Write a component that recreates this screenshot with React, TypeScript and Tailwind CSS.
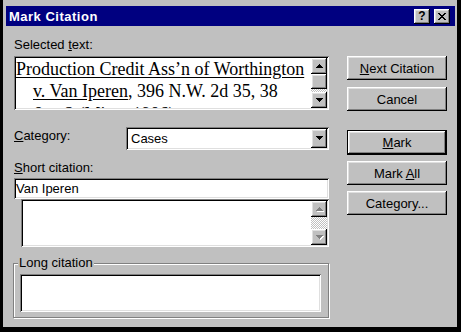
import React from "react";

const raised =
  "shadow-[inset_-1px_-1px_#000000,inset_1px_1px_#ffffff,inset_-2px_-2px_#808080,inset_2px_2px_#dfdfdf]";
const sunken =
  "shadow-[inset_1px_1px_#808080,inset_-1px_-1px_#ffffff,inset_2px_2px_#000000,inset_-2px_-2px_#dfdfdf]";
const dither =
  "bg-[image:repeating-conic-gradient(#c0c0c0_0%_25%,#ffffff_0%_50%)] bg-[length:2px_2px]";

const UP = "M3 0h1v1h1v1h1v1h1v1H0V3h1V2h1V1h1z";
const DOWN = "M0 0h7v1H6v1H5v1H4v1H3V3H2V2H1V1H0z";

function Arrow({ up, disabled }: { up?: boolean; disabled?: boolean }) {
  const d = up ? UP : DOWN;
  return (
    <svg width="8" height="5" viewBox="0 0 8 5" shapeRendering="crispEdges">
      {disabled && <path d={d} fill="#ffffff" transform="translate(1 1)" />}
      <path d={d} fill={disabled ? "#808080" : "#000000"} />
    </svg>
  );
}

function ScrollBtn({ up, disabled }: { up?: boolean; disabled?: boolean }) {
  return (
    <div className={`w-[16px] h-[16px] shrink-0 bg-[#c0c0c0] ${raised} flex items-center justify-center pl-px`}>
      <Arrow up={up} disabled={disabled} />
    </div>
  );
}

function Btn({ children, isDefault }: { children: React.ReactNode; isDefault?: boolean }) {
  if (isDefault) {
    return (
      <div className="h-[25px] border border-black">
        <div className={`h-full bg-[#c0c0c0] ${raised} flex items-center justify-center`}>{children}</div>
      </div>
    );
  }
  return <div className={`h-[24px] bg-[#c0c0c0] ${raised} flex items-center justify-center`}>{children}</div>;
}

const X_PIXELS = [
  [0, 0], [1, 0], [6, 0], [7, 0],
  [1, 1], [2, 1], [5, 1], [6, 1],
  [2, 2], [3, 2], [4, 2], [5, 2],
  [3, 3], [4, 3],
  [2, 4], [3, 4], [4, 4], [5, 4],
  [1, 5], [2, 5], [5, 5], [6, 5],
  [0, 6], [1, 6], [6, 6], [7, 6],
];

export default function App() {
  return (
    <div className="w-[461px] h-[332px] bg-[#c0c0c0] border-l-[3px] border-r-[4px] border-b-[5px] border-black pt-[6px] pl-[3px] pr-[2px] flex flex-col text-[13px] leading-[15px] text-black font-['Liberation_Sans',Arial,sans-serif]">
      {/* Title bar */}
      <div className="h-[20px] shrink-0 bg-[#000080] flex items-center pl-[3px] pr-[5px]">
        <span className="flex-1 text-white font-bold text-[13px] tracking-[0.5px]">Mark Citation</span>
        <div className="flex gap-[4px]">
          <div className={`w-[16px] h-[15px] bg-[#c0c0c0] ${raised} flex items-center justify-center text-[12px] font-bold leading-none`}>
            ?
          </div>
          <div className={`w-[16px] h-[15px] bg-[#c0c0c0] ${raised} flex items-center justify-center`}>
            <svg width="8" height="7" viewBox="0 0 8 7" shapeRendering="crispEdges">
              {X_PIXELS.map(([x, y]) => (
                <rect key={`${x}-${y}`} x={x} y={y} width="1" height="1" fill="#000000" />
              ))}
            </svg>
          </div>
        </div>
      </div>

      {/* Body */}
      <div className="flex pt-[11px] pl-[8px]">
        {/* Left column */}
        <div className="w-[315px] flex flex-col">
          <div>
            Selected <span className="underline">t</span>ext:
          </div>

          <div className={`mt-[4px] h-[54px] bg-white ${sunken} p-[2px] flex`}>
            <div className="flex-1 overflow-hidden text-[18px] leading-[22px] font-['Liberation_Serif','Times_New_Roman',serif] whitespace-nowrap">
              <div className="underline underline-offset-[2px]">Production Credit Ass&rsquo;n of Worthington</div>
              <div className="pl-[17px]">
                <span className="underline underline-offset-[2px]">v. Van Iperen</span>, 396 N.W. 2d 35, 38
              </div>
              <div className="pl-[17px] mt-[1px]">&amp; n.2 (Minn. 1986).</div>
            </div>
            <div className="w-[16px] flex flex-col">
              <ScrollBtn up />
              <div className={`h-[15px] shrink-0 bg-[#c0c0c0] ${raised}`} />
              <div className={`flex-1 ${dither}`} />
              <ScrollBtn />
            </div>
          </div>

          <div className="mt-[17px] flex items-start">
            <div className="w-[112px] pt-[1px]">
              <span className="underline">C</span>ategory:
            </div>
            <div className={`flex-1 h-[23px] bg-white ${sunken} p-[2px] flex`}>
              <div className="flex-1 pl-[3px] flex items-center">Cases</div>
              <div className={`w-[16px] bg-[#c0c0c0] ${raised} flex items-center justify-center pl-px`}>
                <Arrow />
              </div>
            </div>
          </div>

          <div className="mt-[10px]">
            <span className="underline">S</span>hort citation:
          </div>
          <div className={`mt-[3px] h-[21px] bg-white ${sunken} px-[2px] flex items-center`}>Van Iperen</div>
          <div className={`ml-[7px] h-[48px] bg-white ${sunken} p-[2px] flex justify-end`}>
            <div className="w-[16px] flex flex-col">
              <ScrollBtn up disabled />
              <div className={`flex-1 ${dither}`} />
              <ScrollBtn disabled />
            </div>
          </div>

          {/* Long citation group */}
          <div className="relative mt-[16px] -ml-px h-[55px] border border-[#808080] shadow-[inset_1px_1px_#ffffff,1px_1px_#ffffff] pt-[10px] pl-[6px]">
            <span className="absolute left-[4px] top-[-9px] px-[1px] bg-[#c0c0c0]">Long citation</span>
            <div className={`w-[301px] h-[38px] bg-white ${sunken}`} />
          </div>
        </div>

        {/* Right column */}
        <div className="w-[100px] ml-[18px] pt-[19px] flex flex-col">
          <Btn>
            <span>
              <span className="underline">N</span>ext Citation
            </span>
          </Btn>
          <div className="mt-[7px]">
            <Btn>Cancel</Btn>
          </div>
          <div className="mt-[19px]">
            <Btn isDefault>
              <span>
                <span className="underline">M</span>ark
              </span>
            </Btn>
          </div>
          <div className="mt-[6px]">
            <Btn>
              <span>
                Mark <span className="underline">A</span>ll
              </span>
            </Btn>
          </div>
          <div className="mt-[6px]">
            <Btn>
              <span>
                Cate<span className="underline">g</span>ory...
              </span>
            </Btn>
          </div>
        </div>
      </div>
    </div>
  );
}
